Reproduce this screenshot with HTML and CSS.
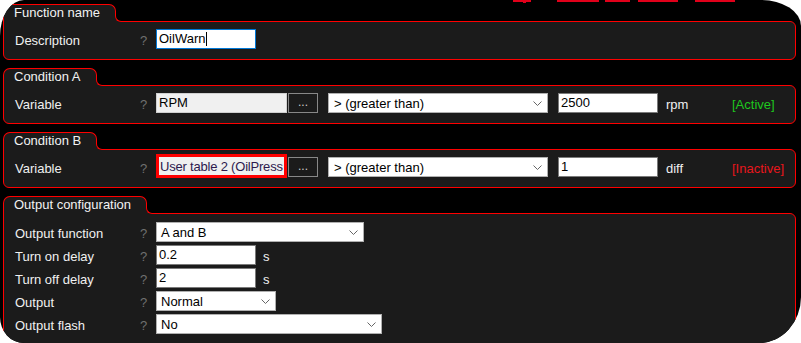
FILE: index.html
```html
<!DOCTYPE html>
<html>
<head>
<meta charset="utf-8">
<link rel="stylesheet" href="styles.css">
</head>
<body>
<div class="frame">
  <svg class="logo" width="230" height="4" viewBox="0 0 230 4">
    <rect x="3" y="0" width="18" height="2" fill="#e0001a"/>
    <rect x="13" y="0" width="3" height="3" fill="#e0001a"/>
    <rect x="47" y="0" width="42" height="2" fill="#e0001a"/>
    <rect x="95" y="0" width="25" height="2" fill="#e0001a"/>
    <rect x="128" y="0" width="40" height="2" fill="#e0001a"/>
    <rect x="185" y="0" width="40" height="2" fill="#e0001a"/>
  </svg>

  <section class="panel">
    <div class="tab">Function name</div>
    <div class="body">
      <div class="row">
        <span class="label">Description</span><span class="help">?</span>
        <div class="ctrls"><span class="field focus w100">OilWarn<span class="caret"></span></span></div>
      </div>
    </div>
  </section>

  <section class="panel">
    <div class="tab">Condition A</div>
    <div class="body">
      <div class="row">
        <span class="label">Variable</span><span class="help">?</span>
        <div class="ctrls">
          <span class="field ro wvar">RPM</span>
          <span class="btn">...</span>
          <div class="select wcond"><span>&gt; (greater than)</span><svg class="chev" width="9" height="5" viewBox="0 0 9 5"><path d="M0.5 0.5 L4.5 4.5 L8.5 0.5" fill="none" stroke="#666" stroke-width="1"/></svg></div>
          <span class="field dark w100">2500</span>
          <span class="unit">rpm</span>
          <span class="status on">[Active]</span>
        </div>
      </div>
    </div>
  </section>

  <section class="panel">
    <div class="tab">Condition B</div>
    <div class="body">
      <div class="row">
        <span class="label">Variable</span><span class="help">?</span>
        <div class="ctrls">
          <span class="field ro err wvar">User table 2 (OilPress</span>
          <span class="btn">...</span>
          <div class="select wcond"><span>&gt; (greater than)</span><svg class="chev" width="9" height="5" viewBox="0 0 9 5"><path d="M0.5 0.5 L4.5 4.5 L8.5 0.5" fill="none" stroke="#666" stroke-width="1"/></svg></div>
          <span class="field dark w100">1</span>
          <span class="unit">diff</span>
          <span class="status off">[Inactive]</span>
        </div>
      </div>
    </div>
  </section>

  <section class="panel">
    <div class="tab">Output configuration</div>
    <div class="body rows">
      <div class="row">
        <span class="label">Output function</span><span class="help">?</span>
        <div class="ctrls"><div class="select wfunc"><span>A and B</span><svg class="chev" width="9" height="5" viewBox="0 0 9 5"><path d="M0.5 0.5 L4.5 4.5 L8.5 0.5" fill="none" stroke="#666" stroke-width="1"/></svg></div></div>
      </div>
      <div class="row">
        <span class="label">Turn on delay</span><span class="help">?</span>
        <div class="ctrls"><span class="field dark w100">0.2</span><span class="unit s">s</span></div>
      </div>
      <div class="row">
        <span class="label">Turn off delay</span><span class="help">?</span>
        <div class="ctrls"><span class="field dark w100">2</span><span class="unit s">s</span></div>
      </div>
      <div class="row">
        <span class="label">Output</span><span class="help">?</span>
        <div class="ctrls"><div class="select wout"><span>Normal</span><svg class="chev" width="9" height="5" viewBox="0 0 9 5"><path d="M0.5 0.5 L4.5 4.5 L8.5 0.5" fill="none" stroke="#666" stroke-width="1"/></svg></div></div>
      </div>
      <div class="row">
        <span class="label">Output flash</span><span class="help">?</span>
        <div class="ctrls"><div class="select wflash"><span>No</span><svg class="chev" width="9" height="5" viewBox="0 0 9 5"><path d="M0.5 0.5 L4.5 4.5 L8.5 0.5" fill="none" stroke="#666" stroke-width="1"/></svg></div></div>
      </div>
    </div>
  </section>
</div>
</body>
</html>
```

FILE: styles.css
```css
* { box-sizing: border-box; }
html, body { margin: 0; padding: 0; background: #fff; }
body { font-family: "Liberation Sans", Arial, sans-serif; font-size: 13px; }

.frame {
  width: 801px;
  height: 343px;
  background: #000;
  overflow: hidden;
  position: relative;
  border-radius: 24px 40px 42px 24px / 36px 26px 46px 26px;
  padding: 4px 5px 0 3px;
  color: #f0f0f0;
}

.logo { position: absolute; top: 0; left: 510px; }

.panel { display: flex; flex-direction: column; align-items: flex-start; }
.panel + .panel { margin-top: 8px; }

.tab {
  position: relative;
  z-index: 1;
  height: 18px;
  margin-bottom: -1px;
  border: 1px solid #f00;
  border-bottom: 0;
  border-radius: 7px 7px 0 0;
  background: #1b1b1b;
  padding: 0 15px 0 10px;
  line-height: 16px;
  color: #f2f2f2;
  white-space: nowrap;
}
.tab::before, .tab::after {
  content: "";
  position: absolute;
  left: 100%;
  bottom: 0;
  width: 8px;
  height: 8px;
}
.tab::before { background: #1b1b1b; }
.tab::after {
  background: #000;
  border-left: 1px solid #f00;
  border-bottom: 1px solid #f00;
  border-bottom-left-radius: 6px;
}

.body {
  align-self: stretch;
  border: 1px solid #f00;
  border-radius: 0 6px 6px 6px;
  background: #1b1b1b;
  padding: 7px 10px 10px 11px;
}
.rows { display: flex; flex-direction: column; gap: 3px; padding-top: 8px; }

.row {
  display: grid;
  grid-template-columns: 125px 16px 1fr;
  height: 20px;
  align-items: start;
}
.label { line-height: 20px; padding-top: 2px; color: #f0f0f0; white-space: nowrap; }
.help { line-height: 20px; padding-top: 2px; color: #707070; }

.ctrls { display: flex; align-items: flex-start; }

.field {
  display: block;
  height: 20px;
  border: 1px solid #aaa;
  background: #fff;
  color: #000;
  line-height: 18px;
  padding: 0 2px;
  white-space: nowrap;
  overflow: hidden;
}
.field.dark { border-color: #7a7a7a; }
.field.focus { border-color: #0078d7; display: flex; align-items: center; }
.caret { display: inline-block; width: 1px; height: 14px; background: #000; margin-left: 1px; }
.field.ro { background: #f0f0f0; border-color: #d0d0d0; }
.field.err {
  height: 24px;
  margin-top: -3px;
  margin-bottom: -1px;
  border: 3px solid #f00;
  padding: 1px 0 0 1px;
  color: #2e1a4e;
  letter-spacing: -0.2px;
}
.w100 { width: 100px; }
.wvar { width: 131px; }

.btn {
  display: block;
  width: 30px;
  height: 20px;
  margin-left: 1px;
  border: 1px solid #888;
  background: #1b1b1b;
  color: #ccc;
  text-align: center;
  line-height: 16px;
  font-size: 12px;
}

.select {
  display: flex;
  align-items: center;
  height: 20px;
  border: 1px solid #b0b0b0;
  background: #fff;
  color: #000;
  padding: 0 5px 0 4px;
  white-space: nowrap;
}
.select .chev { margin-left: auto; }
.wcond { width: 220px; margin-left: 10px; padding-left: 5px; }
.wfunc { width: 208px; }
.wout { width: 120px; }
.wflash { width: 226px; }
.wcond + .field { margin-left: 10px; }

.unit { line-height: 20px; padding-top: 2px; margin-left: 8px; width: 66px; color: #f0f0f0; }
.unit.s { margin-left: 7px; }
.status { line-height: 20px; padding-top: 2px; }
.status.on { color: #1ec81e; }
.status.off { color: #e8161c; }
```
